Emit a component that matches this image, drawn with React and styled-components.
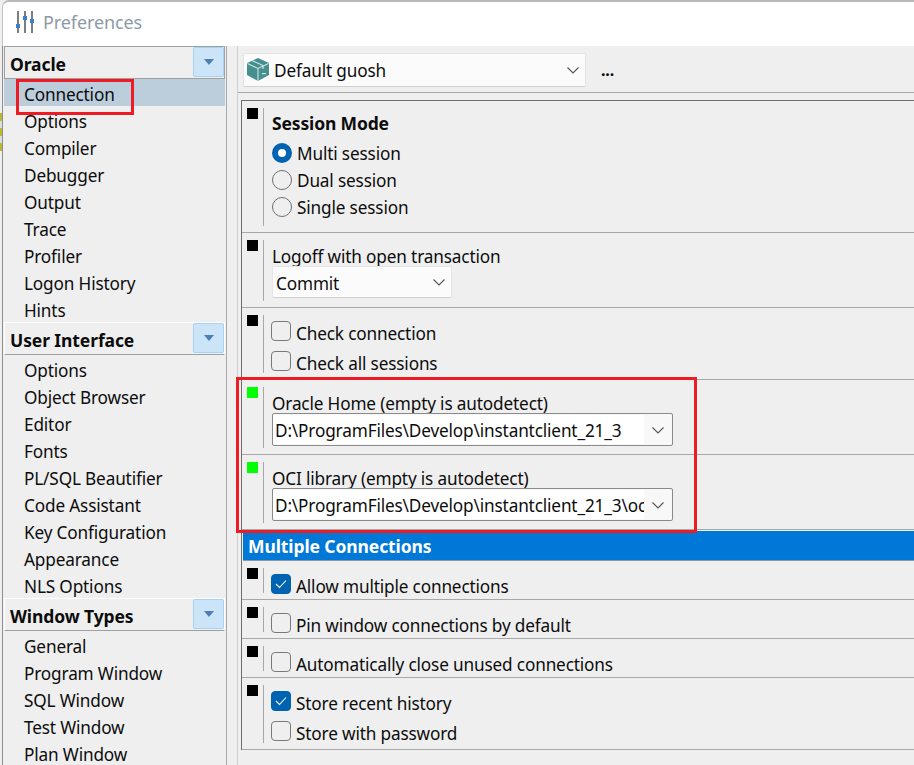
import React from 'react';
import styled, { createGlobalStyle } from 'styled-components';

const Global = createGlobalStyle`
  html, body { margin: 0; padding: 0; background: #f0f0f0; }
  * { box-sizing: border-box; }
`;

const Page = styled.div`
  position: relative;
  width: 914px;
  height: 765px;
  overflow: hidden;
  background: #efefef;
  color: #0c0c0c;
  font-family: "Noto Sans", "Open Sans", sans-serif;
  font-size: 17.2px;
  letter-spacing: -0.15px;
`;

const TitleBar = styled.header`
  height: 46px;
  margin-left: 2px;
  background: #fff;
  border-top: 2px solid #b9b9b9;
  border-left: 1px solid #c4c4c4;
  border-top-left-radius: 7px;
  display: flex;
  align-items: center;
  padding: 0 0 4px 13px;
  gap: 9px;
`;

const TitleText = styled.span`
  color: #8d9aa6;
  font-size: 18px;
  letter-spacing: -0.1px;
`;

const Body = styled.div`
  display: flex;
  height: 719px;
  margin-left: 2px;
  border-left: 1px solid #8f8f8f;
`;

const Sidebar = styled.nav`
  width: 224px;
  flex: none;
  padding-right: 1px;
  border-right: 1px solid #a8a8a8;
`;

const GroupHeader = styled.div`
  height: 33px;
  margin-left: 1px;
  display: flex;
  align-items: center;
  justify-content: space-between;
  padding: 2px 0 3px 5px;
  font-weight: 700;
  font-size: 17.5px;
  letter-spacing: -0.1px;
  border: 1px solid ${p => (p.$first ? '#a0a0a0' : '#fff')};
  border-bottom-color: #a0a0a0;
`;

const GroupTitle = styled.span`
  margin-top: 4px;
`;

const GroupButton = styled.span`
  width: 31px;
  height: 30px;
  flex: none;
  display: flex;
  align-items: center;
  justify-content: center;
  background: #cce4f7;
  border: 1px solid #a6d2f4;
  border-radius: 2px;
  &::after {
    content: '';
    border-left: 5px solid transparent;
    border-right: 5px solid transparent;
    border-top: 6px solid #4f7fb5;
  }
`;

const NavItem = styled.div`
  height: 27px;
  line-height: 31px;
  margin-left: 1px;
  padding-left: 20px;
  background: ${p => (p.$active ? '#bccddc' : 'transparent')};
`;

const Main = styled.main`
  flex: 1;
  min-width: 0;
  margin-left: 10px;
  border-left: 1px solid #d0d0d0;
`;

const Toolbar = styled.div`
  height: 47px;
  display: flex;
  align-items: center;
  padding: 1px 0 0 5px;
  border-bottom: 1px solid #a8a8a8;
`;

const ProfileSelect = styled.div`
  width: 343px;
  height: 34px;
  display: flex;
  align-items: center;
  padding: 0 5px 0 3px;
  gap: 5px;
  background: #fbfbfb;
  border: 1px solid #e4e4e4;
  border-bottom-color: #cfcfcf;
  border-radius: 2px;
`;

const Grow = styled.span`
  flex: 1;
  padding-top: 2px;
  white-space: nowrap;
  overflow: hidden;
`;

const More = styled.span`
  margin-left: 15px;
  font-weight: 700;
  font-size: 16px;
  line-height: 16px;
`;

const Panel = styled.div`
  margin: 7px 0 0 3px;
  border-top: 1px solid #6e6e6e;
  border-left: 1px solid #6e6e6e;
`;

const Row = styled.section`
  height: ${p => p.$h}px;
  display: flex;
  padding: 7px 0 6px 5px;
  border-bottom: 1px solid #a8a8a8;
`;

const Marker = styled.i`
  display: block;
  width: 11px;
  height: 11px;
  flex: none;
  background: ${p => (p.$on ? '#00ff00' : '#000')};
`;

const Rule = styled.div`
  width: 1px;
  flex: none;
  margin-left: 5px;
  background: #a8a8a8;
`;

const Content = styled.div`
  flex: 1;
  min-width: 0;
  padding: ${p => p.$top || 0}px 0 0 8px;
  display: flex;
  flex-direction: column;
`;

const Label = styled.div`
  flex: none;
  line-height: 26px;
  font-weight: ${p => (p.$bold ? 700 : 400)};
  font-size: ${p => (p.$bold ? 17.5 : 17.2)}px;
  margin-bottom: ${p => (p.$bold ? 3 : 0)}px;
`;

const ChoiceRow = styled.div`
  flex: none;
  height: ${p => p.$h || 27}px;
  display: flex;
  align-items: center;
  gap: 5px;
  margin-left: ${p => p.$shift || 0}px;
`;

const ChoiceText = styled.span`
  padding-top: ${p => p.$nudge}px;
`;

const Radio = styled.span`
  width: 20px;
  height: 20px;
  flex: none;
  border-radius: 50%;
  background: ${p => (p.$on ? '#fff' : 'transparent')};
  border: ${p => (p.$on ? '6px solid #0063b1' : '1px solid #6f6f6f')};
`;

const Check = styled.span`
  width: 20px;
  height: 20px;
  flex: none;
  display: flex;
  align-items: center;
  justify-content: center;
  border-radius: 4px;
  background: ${p => (p.$on ? '#0063b1' : 'transparent')};
  border: 1px solid ${p => (p.$on ? '#0063b1' : '#7a7a7a')};
`;

const PlainSelect = styled.div`
  flex: none;
  width: 180px;
  height: 32px;
  margin-top: -4px;
  display: flex;
  align-items: center;
  justify-content: space-between;
  padding: 0 5px 0 3px;
  background: #fbfbfb;
  border: 1px solid #e6e6e6;
  border-bottom-color: #cfcfcf;
  border-radius: 2px;
`;

const SelectText = styled.span`
  padding-top: 2px;
`;

const Combo = styled.div`
  flex: none;
  width: 401px;
  height: 33px;
  margin-top: -4px;
  display: flex;
  align-items: center;
  padding-right: 7px;
  background: #f8f8f8;
  border: 1px solid #8a8a8a;
  border-radius: 2px;
`;

const ComboField = styled.span`
  flex: 1;
  min-width: 0;
  height: 29px;
  line-height: 32px;
  padding-left: 2px;
  margin-right: 7px;
  background: #fff;
  white-space: nowrap;
  overflow: hidden;
`;

const SectionBar = styled.div`
  height: 30px;
  margin: 1px 0 0 1px;
  padding-left: 5px;
  line-height: 31px;
  background: #0078d7;
  color: #fff;
  font-weight: 700;
  font-size: 17.5px;
  letter-spacing: -0.1px;
  border-bottom: 1px solid #8a9aa8;
`;

const Annotation = styled.div`
  position: absolute;
  left: ${p => p.$x}px;
  top: ${p => p.$y}px;
  width: ${p => p.$w}px;
  height: ${p => p.$h}px;
  border: 3px solid #ed1c24;
  pointer-events: none;
`;

/* Slivers of another window showing behind the dialog's left edge */
const BehindWindow = styled.div`
  position: absolute;
  left: 0;
  top: 113px;
  width: 2px;
  height: 38px;
  background: repeating-linear-gradient(to bottom, #b9b935 0 8px, #dcdcdc 8px 15px);
`;

const Chevron = ({ size = 14 }) => (
  <svg width={size} height={size} viewBox="0 0 14 14" fill="none" stroke="#555" strokeWidth="1.1" style={{ flex: 'none' }}>
    <path d="M1.5 4.5 7 10l5.5-5.5" />
  </svg>
);

const Tick = () => (
  <svg width="12" height="10" viewBox="0 0 12 10" fill="none" stroke="#fff" strokeWidth="1.1">
    <path d="M1 5l3.5 3.5L11 1.5" />
  </svg>
);

const SlidersIcon = () => (
  <svg width="18" height="22" viewBox="0 0 18 22" style={{ flex: 'none' }}>
    <rect x="1" y="0" width="2" height="22" fill="#7d7d7d" />
    <rect x="8" y="0" width="2" height="22" fill="#7d7d7d" />
    <rect x="15" y="0" width="2" height="22" fill="#7d7d7d" />
    <rect x="0" y="13" width="4" height="4" fill="#3d7fc4" />
    <rect x="7" y="5" width="4" height="4" fill="#3d7fc4" />
    <rect x="14" y="8" width="4" height="4" fill="#3d7fc4" />
  </svg>
);

const PackageIcon = () => (
  <svg width="22" height="23" viewBox="0 0 22 23" style={{ flex: 'none' }}>
    <path d="M11 0 22 5V17L11 23 0 17V5Z" fill="#478f8f" />
    <path d="M0.5 5.5 11 10.5 21.5 5.5M11 10.5V23" fill="none" stroke="#cfe5e5" strokeWidth="1.1" />
    <path d="M5 2.5 16 7.5V11" fill="none" stroke="#cfe5e5" strokeWidth="1.1" />
    <rect x="15" y="15" width="4" height="1.2" fill="#cfe5e5" />
  </svg>
);

const groups = [
  { title: 'Oracle', items: ['Connection', 'Options', 'Compiler', 'Debugger', 'Output', 'Trace', 'Profiler', 'Logon History', 'Hints'] },
  { title: 'User Interface', items: ['Options', 'Object Browser', 'Editor', 'Fonts', 'PL/SQL Beautifier', 'Code Assistant', 'Key Configuration', 'Appearance', 'NLS Options'] },
  { title: 'Window Types', items: ['General', 'Program Window', 'SQL Window', 'Test Window', 'Plan Window'] },
];

const CheckRow = ({ on, label, h = 30 }) => (
  <ChoiceRow $h={h} $shift={-1}>
    <Check $on={on}>{on && <Tick />}</Check>
    <ChoiceText $nudge={4}>{label}</ChoiceText>
  </ChoiceRow>
);

const RadioRow = ({ on, label }) => (
  <ChoiceRow>
    <Radio $on={on} />
    <ChoiceText $nudge={2}>{label}</ChoiceText>
  </ChoiceRow>
);

export default function App() {
  return (
    <Page>
      <Global />
      <BehindWindow />
      <TitleBar>
        <SlidersIcon />
        <TitleText>Preferences</TitleText>
      </TitleBar>
      <Body>
        <Sidebar>
          {groups.map((g, i) => (
            <div key={g.title}>
              <GroupHeader $first={i === 0}>
                <GroupTitle>{g.title}</GroupTitle>
                <GroupButton />
              </GroupHeader>
              {g.items.map((item, j) => (
                <NavItem key={item} $active={i === 0 && j === 0}>{item}</NavItem>
              ))}
            </div>
          ))}
        </Sidebar>
        <Main>
          <Toolbar>
            <ProfileSelect>
              <PackageIcon />
              <Grow>Default guosh</Grow>
              <Chevron />
            </ProfileSelect>
            <More>...</More>
          </Toolbar>
          <Panel>
            <Row $h={132}>
              <Marker /><Rule />
              <Content $top={2}>
                <Label $bold>Session Mode</Label>
                <RadioRow on label="Multi session" />
                <RadioRow label="Dual session" />
                <RadioRow label="Single session" />
              </Content>
            </Row>
            <Row $h={75}>
              <Marker /><Rule />
              <Content $top={4}>
                <Label>Logoff with open transaction</Label>
                <PlainSelect><SelectText>Commit</SelectText><Chevron /></PlainSelect>
              </Content>
            </Row>
            <Row $h={72}>
              <Marker /><Rule />
              <Content $top={1}>
                <CheckRow label="Check connection" />
                <CheckRow label="Check all sessions" />
              </Content>
            </Row>
            <Row $h={75}>
              <Marker $on /><Rule />
              <Content $top={4}>
                <Label>Oracle Home (empty is autodetect)</Label>
                <Combo><ComboField>D:\ProgramFiles\Develop\instantclient_21_3</ComboField><Chevron /></Combo>
              </Content>
            </Row>
            <Row $h={75}>
              <Marker $on /><Rule />
              <Content $top={4}>
                <Label>OCI library (empty is autodetect)</Label>
                <Combo><ComboField>D:\ProgramFiles\Develop\instantclient_21_3\oci.dll</ComboField><Chevron /></Combo>
              </Content>
            </Row>
            <SectionBar>Multiple Connections</SectionBar>
            <Row $h={39}>
              <Marker /><Rule />
              <Content $top={1}><CheckRow on label="Allow multiple connections" /></Content>
            </Row>
            <Row $h={39}>
              <Marker /><Rule />
              <Content $top={1}><CheckRow label="Pin window connections by default" /></Content>
            </Row>
            <Row $h={39}>
              <Marker /><Rule />
              <Content $top={1}><CheckRow label="Automatically close unused connections" /></Content>
            </Row>
            <Row $h={72}>
              <Marker /><Rule />
              <Content $top={1}>
                <CheckRow on label="Store recent history" />
                <CheckRow label="Store with password" />
              </Content>
            </Row>
          </Panel>
        </Main>
      </Body>
      <Annotation $x={16} $y={79} $w={118} $h={36} />
      <Annotation $x={236} $y={377} $w={461} $h={156} />
    </Page>
  );
}
